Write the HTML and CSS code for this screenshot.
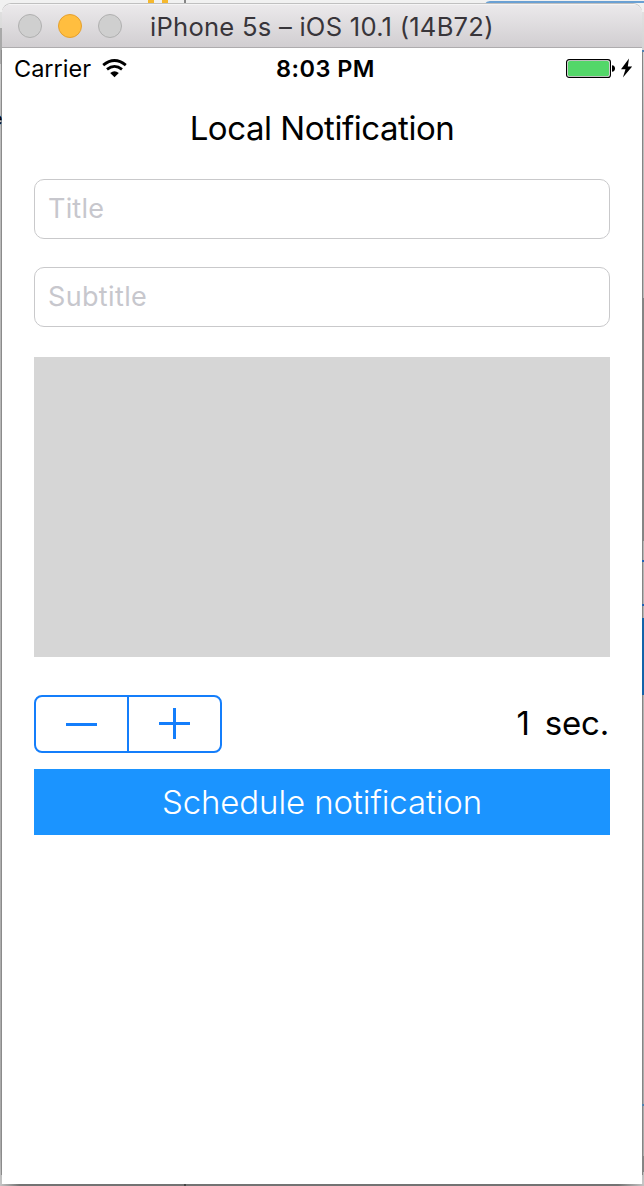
FILE: index.html
```html
<!DOCTYPE html>
<html lang="en">
<head>
<meta charset="utf-8">
<title>Local Notification</title>
<link rel="stylesheet" href="styles.css">
</head>
<body>
<div class="desktop">
  <svg class="backdrop" width="644" height="1186" viewBox="0 0 644 1186" aria-hidden="true">
    <defs>
      <linearGradient id="foot"><stop offset="0" stop-color="#c4c4c4"/><stop offset=".03" stop-color="#737373"/><stop offset=".96" stop-color="#737373"/><stop offset="1" stop-color="#c4c4c4"/></linearGradient>
      <linearGradient id="side" x2="0" y2="1"><stop offset="0" stop-color="#e4e4e4"/><stop offset=".1" stop-color="#bcbcbc"/><stop offset=".97" stop-color="#a9a9a9"/><stop offset="1" stop-color="#c8c8c8"/></linearGradient>
    </defs>
    <rect width="644" height="1186" fill="url(#side)"/>
    <rect width="644" height="12" fill="#f1f1f1"/>
    <rect y="28" width="2" height="36" fill="#a9a9a9"/>
    <rect x="1" y="50" width="1" height="1125" fill="#8b8b8b"/>
    <rect x="642" y="50" width="1" height="1125" fill="#858585"/>
    <path d="M148 0h6v4h-6zM162 0h6v4h-6z" fill="#f5b82e"/>
    <path d="M184 0h2v4h-2z" fill="#858585"/>
    <path d="M486 4q1-2 4-2h154" fill="none" stroke="#6aa0d3" stroke-width="2"/>
    <path d="M642 51h2M642 1105h2" stroke="#4f82b3" stroke-width="2"/>
    <path d="M642 561h2M642 605h2" stroke="#1f62b8" stroke-width="2"/>
    <path d="M642 298h2v243h-2zM642 1156h2v16h-2z" fill="#858585"/>
    <path d="M642 618h2v77h-2z" fill="#1363a9"/>
    <rect y="1184" width="644" height="2" fill="url(#foot)"/>
    <path d="M184 1184h2v2h-2z" fill="#444"/>
  </svg>
  <span class="behind">e</span>
  <main class="window">
    <header class="titlebar">
      <i class="light"></i><i class="light amber"></i><i class="light"></i>
      <span class="caption">iPhone 5s – iOS 10.1 (14B72)</span>
    </header>
    <div class="status">
      <div class="network"><span class="carrier">Carrier</span>
        <svg class="wifi" width="25" height="19" viewBox="0 0 25 19"><path d="M1.2 6.2Q12.5-3.2 23.8 6.2M5 10.4Q12.5 4.4 20 10.4" fill="none" stroke="#000" stroke-width="2.8"/><path d="M8.2 14Q12.5 10.6 16.8 14L12.5 18.2Z"/></svg>
      </div>
      <span class="clock">8:03 PM</span>
      <div class="power">
        <svg width="68" height="22" viewBox="0 0 68 22"><rect x=".6" y="2.6" width="43.8" height="17.8" rx="2.5" fill="#fff" stroke="#000" stroke-width="1.2"/><rect x="2" y="4" width="41" height="15" rx="1.5" fill="#53d769"/><path d="M46 8.2q3 .3 3 3.3t-3 3.3z"/><path d="M63 1.6L55 12.3h4.5L56.9 20.6 66.2 9.4h-4.4Z"/></svg>
      </div>
    </div>
    <h1 class="heading">Local Notification</h1>
    <form class="form">
      <div class="field">Title</div>
      <div class="field subtitle">Subtitle</div>
      <div class="body-area"></div>
      <div class="delay">
        <div class="stepper">
          <span class="step"><svg width="31" height="31" viewBox="0 0 31 31"><path d="M0 15.5h31" stroke="#147efb" stroke-width="3"/></svg></span>
          <span class="step plus"><svg width="31" height="31" viewBox="0 0 31 31"><path d="M0 15.5h31M15.5 0v31" stroke="#147efb" stroke-width="3"/></svg></span>
        </div>
        <span class="seconds"><span>1</span><span>sec.</span></span>
      </div>
      <button class="schedule" type="button">Schedule notification</button>
    </form>
  </main>
</div>
</body>
</html>
```
FILE: styles.css
```css
* { box-sizing: border-box; }
body { margin: 0; font-family: Inter, "Liberation Sans", sans-serif; color: #000; }
.desktop { position: relative; width: 644px; height: 1186px; padding: 4px 2px 2px; overflow: hidden; }
.backdrop { position: absolute; left: 0; top: 0; }
.behind { position: absolute; left: -8px; top: 108px; font-size: 18px; line-height: 22px; }
.window { position: relative; width: 640px; height: 1180px; background: #fff; border-radius: 9px 9px 0 0; overflow: hidden; box-shadow: 0 -1px 0 #c0c0c0; }
.titlebar { display: flex; align-items: center; height: 44px; padding-left: 16px; gap: 16px; background: linear-gradient(#ebe9eb, #d1ced1); border-top: 1px solid #f5f4f5; border-bottom: 1px solid #aeacae; }
.light { flex: none; width: 24px; height: 24px; border-radius: 50%; background: #cfcfcf; border: 1px solid #b0b0b0; }
.amber { background: #ffbe3f; border-color: #e5a02e; }
.caption { margin-left: 12px; padding-top: 1px; font-size: 25.6px; color: #38353a; white-space: nowrap; letter-spacing: .24px; }
.status { display: grid; grid-template-columns: 1fr auto 1fr; align-items: center; height: 41px; padding: 0 8px 0 12px; }
.network { display: flex; align-items: center; gap: 11px; }
.carrier { font-size: 23.5px; }
.clock { padding-left: 3px; font-size: 23.5px; font-weight: 600; letter-spacing: .45px; white-space: nowrap; }
.power { display: flex; justify-content: flex-end; padding-bottom: 2px; }
.heading { margin: 0; height: 77px; font-size: 33px; font-weight: 400; line-height: 79px; letter-spacing: -.45px; text-align: center; white-space: nowrap; }
.form { display: flex; flex-direction: column; padding: 13px 32px 0; }
.field { height: 60px; margin-bottom: 28px; padding-left: 13px; border: 1px solid #c9c9cb; border-radius: 10px; font-size: 27px; line-height: 57px; letter-spacing: .2px; color: #c7c7cd; }
.subtitle { letter-spacing: .35px; }
.body-area { height: 300px; margin-top: 2px; background: #d6d6d6; }
.delay { display: flex; justify-content: space-between; align-items: center; height: 58px; margin: 38px 0 16px; }
.stepper { display: grid; grid-template-columns: 93px 1fr; width: 188px; height: 58px; border: 2px solid #147efb; border-radius: 8px; }
.step { display: flex; align-items: center; justify-content: center; }
.step:first-child { border-right: 2px solid #147efb; }
.plus { padding: 0 1px 2px 0; }
.seconds { display: flex; gap: 15px; padding-right: 1px; padding-bottom: 2px; font-size: 33px; letter-spacing: -.2px; }
.schedule { height: 66px; padding: 0; border: 0; background: #1b94ff; color: #fff; font: 350 33px/66px Inter, "Liberation Sans", sans-serif; letter-spacing: -.1px; white-space: nowrap; }
```
